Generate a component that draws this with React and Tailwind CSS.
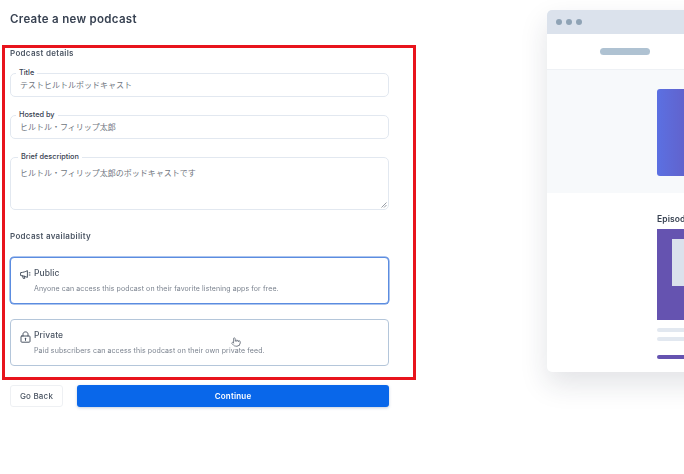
import { Pointer } from 'lucide-react';

const jp = "font-['Inter','Noto_Sans_CJK_JP',sans-serif]";

const MegaphoneIcon = () => (
  <svg width="11" height="11" viewBox="0 0 11 11" fill="none" stroke="currentColor" strokeWidth="1" strokeLinejoin="round" strokeLinecap="round">
    <path d="M1 3.6 C3 3.4 5.5 2.8 7.4 1.6 V8.4 C5.5 7.4 3 6.8 1 6.6 Z" />
    <path d="M2.6 6.9 L3.2 9.4 H4.8 L4.4 7.2" />
    <path d="M9.2 3.8 H10 M9.2 6 H10" />
  </svg>
);

const LockIcon = () => (
  <svg width="11" height="12" viewBox="0 0 11 12" fill="none" stroke="currentColor" strokeWidth="1" strokeLinejoin="round" strokeLinecap="round">
    <rect x="1" y="5" width="9" height="6.2" rx="0.8" />
    <path d="M3 5 V3.2 C3 1.8 4 0.9 5.5 0.9 C7 0.9 8 1.8 8 3.2 V5" />
    <circle cx="5.5" cy="7.6" r="0.8" fill="currentColor" stroke="none" />
    <path d="M5.5 8 V9.4" />
  </svg>
);

const Field = ({ label, value }) => (
  <div className="relative h-[24px] rounded-[5px] border border-[#e2e8f0] bg-white pl-[9px] flex items-center">
    <span className="absolute left-[5px] top-[-7px] bg-white px-[3px] text-[7.3px] leading-[12px] font-medium text-[#374151]">
      {label}
    </span>
    <span className="text-[8px] text-[#6f7680]">{value}</span>
  </div>
);

const OptionCard = ({ icon, title, text, className }) => (
  <div className={`h-[47px] rounded-[4px] bg-white pl-[9px] pt-[9px] flex ${className}`}>
    <div className="w-[14px] pt-[2px] text-[#4b5563]">{icon}</div>
    <div>
      <div className="text-[8.5px] leading-[13px] font-medium tracking-[0.1px] text-[#4b5563]">{title}</div>
      <div className="mt-[3px] text-[7px] leading-[12px] tracking-[0.1px] text-[#7a828e]">{text}</div>
    </div>
  </div>
);

const PreviewWindow = () => (
  <div className="ml-[158px] mt-[10px] h-[362px] w-[400px] shrink-0 rounded-[5px] bg-white shadow-[0_12px_28px_rgba(30,41,59,0.13)] overflow-hidden flex flex-col">
    <div className="h-[24px] bg-[#dbe2ec] pl-[9px] flex items-center gap-[4px]">
      <span className="size-[6px] rounded-full bg-[#8fa3b5]" />
      <span className="size-[6px] rounded-full bg-[#8fa3b5]" />
      <span className="size-[6px] rounded-full bg-[#8fa3b5]" />
    </div>
    <div className="h-[36px] border-b border-[#eef1f5] pl-[53px] flex items-center">
      <div className="h-[7px] w-[50px] rounded-full bg-[#afc2d2]" />
    </div>
    <div className="h-[123px] bg-[#f7f9fb] pl-[110px] pt-[19px]">
      <div className="h-[87px] w-[200px] rounded-[3px] bg-gradient-to-r from-[#5b70e2] to-[#6553b4] bg-[length:60px_100%] bg-no-repeat bg-[#6553b4]" />
    </div>
    <div className="flex-1 pl-[110px] pt-[20px]">
      <div className="text-[8.5px] leading-[12px] font-semibold tracking-[0.1px] text-[#374151]">Episodes</div>
      <div className="mt-[4px] h-[91px] w-[200px] bg-[#6553b0] pl-[15px] pt-[10px]">
        <div className="h-[47px] w-[120px] bg-[#dbe1ec]" />
      </div>
      <div className="mt-[8px] h-[4px] w-[200px] rounded-full bg-[#e2e8f0]" />
      <div className="mt-[5px] h-[4px] w-[200px] rounded-full bg-[#e2e8f0]" />
      <div className="mt-[14px] h-[4px] w-[200px] rounded-full bg-[#6553b0]" />
    </div>
  </div>
);

export default function App() {
  return (
    <div className={`relative h-[474px] w-[684px] overflow-hidden bg-white ${jp}`}>
      <div className="flex h-full blur-[0.4px]">
        <div className="w-[389px] shrink-0 pl-[10px] flex flex-col">
          <h1 className="mt-[11px] text-[11.5px] leading-[17px] font-semibold tracking-[0.3px] text-[#374151]">
            Create a new podcast
          </h1>
          <h2 className="mt-[19px] text-[8px] leading-[13px] font-semibold tracking-[0.3px] text-[#4b5563]">
            Podcast details
          </h2>
          <div className="mt-[13px] flex flex-col gap-[18px]">
            <Field label="Title" value="テストヒルトルポッドキャスト" />
            <Field label="Hosted by" value="ヒルトル・フィリップ太郎" />
          </div>
          {/* Brief description */}
          <div className="relative mt-[18px] h-[53px] rounded-[5px] border border-[#e2e8f0] bg-white pl-[9px] pt-[9px]">
            <span className="absolute left-[7px] top-[-7px] bg-white px-[3px] text-[7.3px] leading-[12px] font-medium text-[#374151]">
              Brief description
            </span>
            <span className="block text-[8px] leading-[12px] text-[#6f7680]">
              ヒルトル・フィリップ太郎のポッドキャストです
            </span>
            <svg className="absolute right-[1px] bottom-[1px]" width="6" height="6" viewBox="0 0 6 6">
              <path d="M0.5 5.5 L5.5 0.5 M3 5.5 L5.5 3" stroke="#6b7280" strokeWidth="0.7" />
            </svg>
          </div>
          <h2 className="mt-[20px] text-[8px] leading-[13px] font-semibold tracking-[0.3px] text-[#4b5563]">
            Podcast availability
          </h2>
          <div className="mt-[14px] flex flex-col gap-[15px]">
            <OptionCard
              className="border border-[#5b8ce0] shadow-[0_0_0_0.5px_#5b8ce0]"
              icon={<MegaphoneIcon />}
              title="Public"
              text="Anyone can access this podcast on their favorite listening apps for free."
            />
            <OptionCard
              className="border border-[#b4c6da]"
              icon={<LockIcon />}
              title="Private"
              text="Paid subscribers can access this podcast on their own private feed."
            />
          </div>
          <div className="mt-[19px] flex gap-[14px]">
            <button className="h-[22px] w-[53px] rounded-[3px] border border-[#eef0f3] bg-white text-[8px] font-medium tracking-[0.2px] text-[#4b5563]">
              Go Back
            </button>
            <button className="h-[22px] flex-1 rounded-[3px] bg-[#0967ea] text-[8px] font-semibold tracking-[0.2px] text-white shadow-[0_1px_3px_rgba(30,64,120,0.25)]">
              Continue
            </button>
          </div>
        </div>
        <PreviewWindow />
      </div>
      {/* cursor */}
      <Pointer size={10} strokeWidth={1.4} className="absolute left-[231px] top-[337px] fill-white text-[#374151]" />
      {/* red annotation box */}
      <div className="absolute left-[2px] top-[45px] h-[335px] w-[414px] border-[3px] border-[#e8141c]" />
    </div>
  );
}
